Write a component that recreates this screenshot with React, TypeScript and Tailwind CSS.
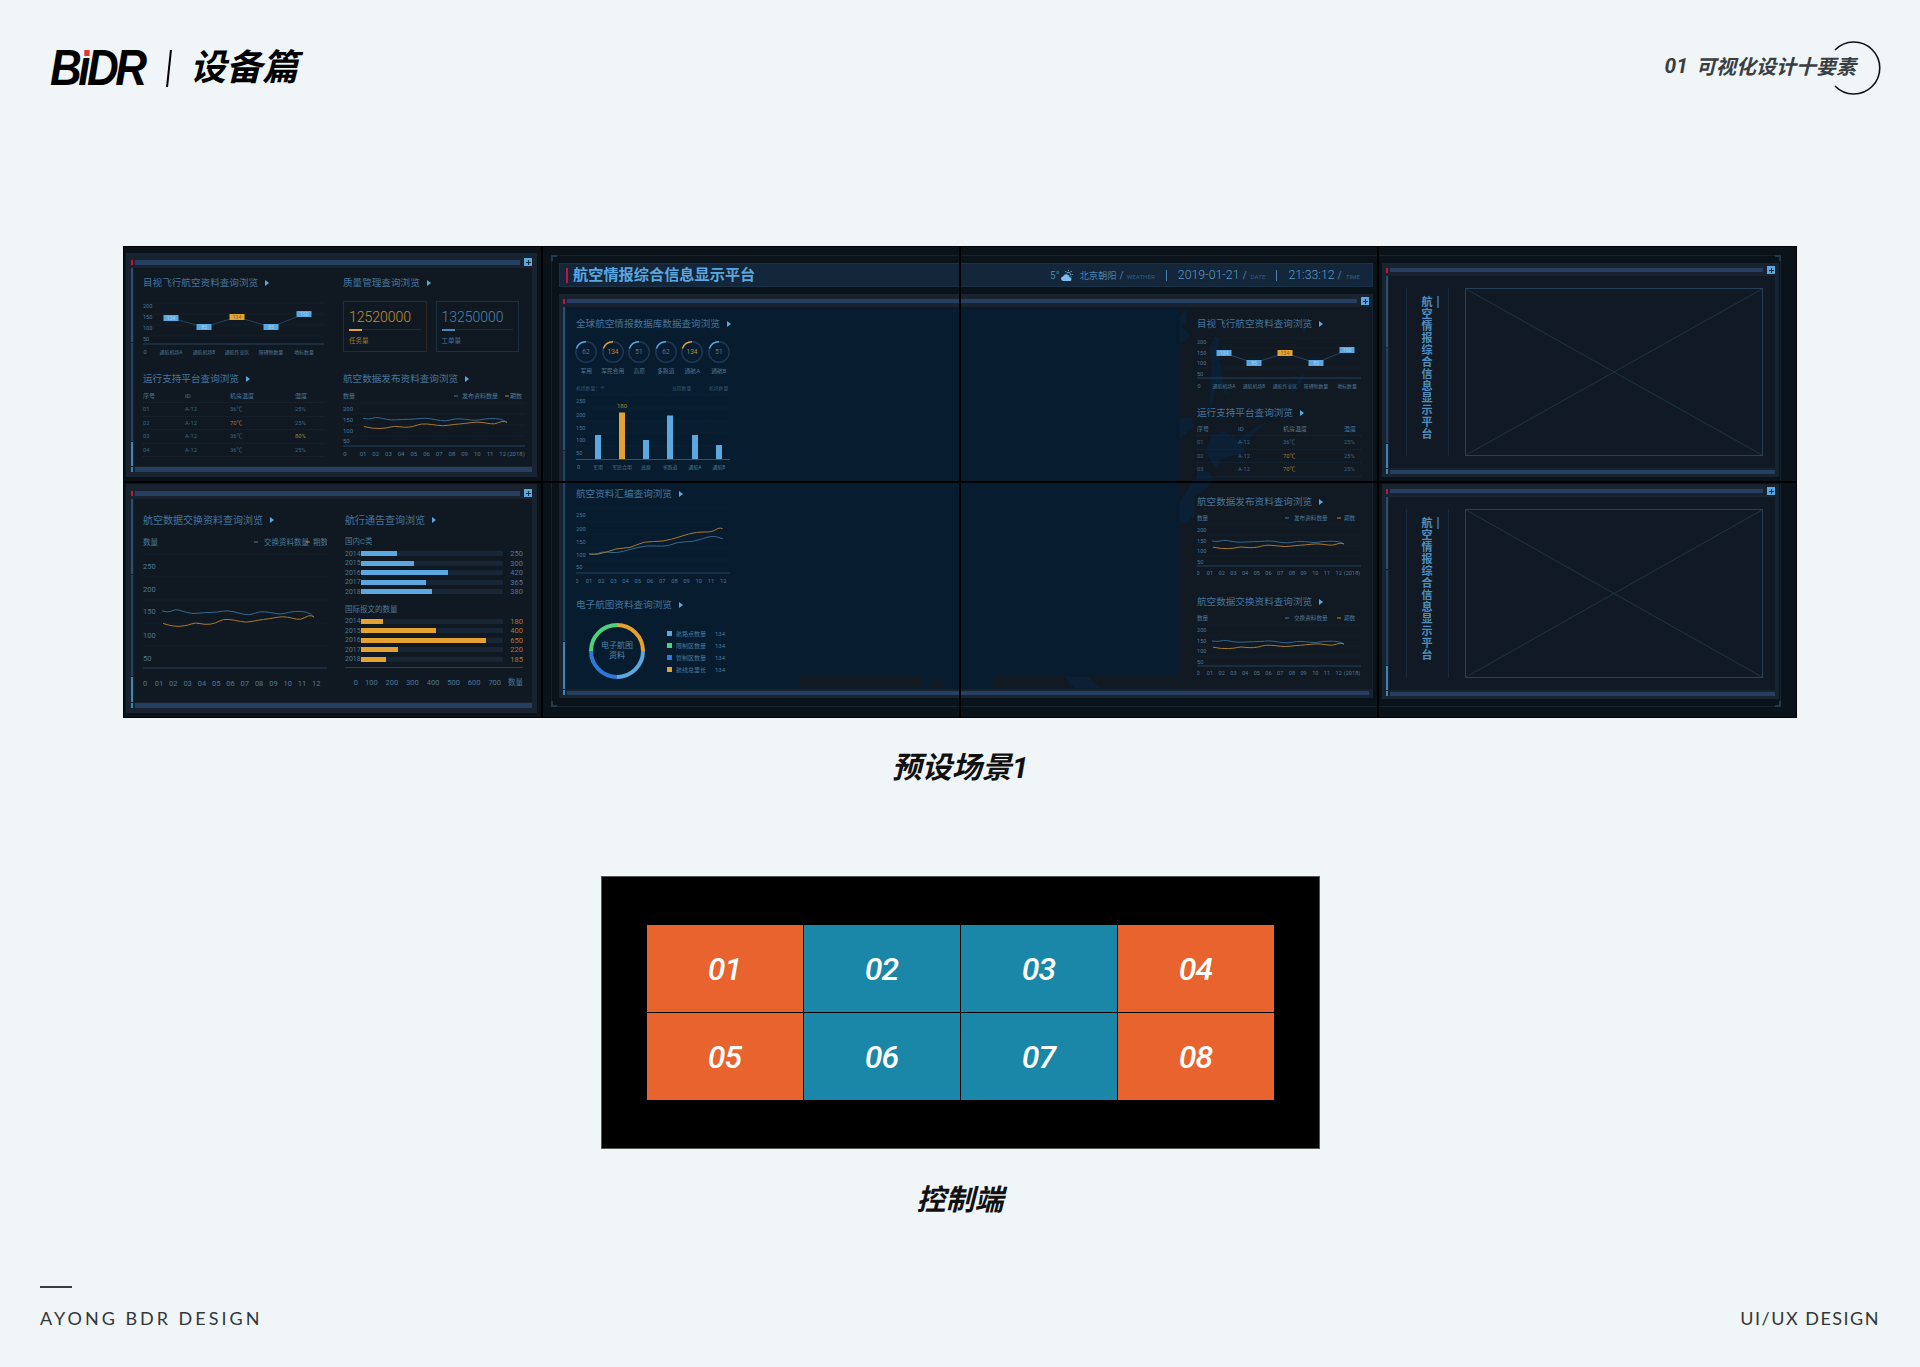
import { Plus } from 'lucide-react';
import { BsCloudSunFill } from 'react-icons/bs';

type Pt = number[];

const BLUE = '#5ba7e0';
const ORANGE = '#e3a233';
const LINE_BLUE = '#336890';
const LINE_ORANGE = '#a8782c';

const wave1: Pt[] = [[125,392],[145,398],[165,386],[185,392],[215,401],[250,397],[290,396],[325,390],[355,398],[390,406],[420,393],[450,396],[485,403],[510,395],[550,392],[575,400],[585,412]];
const wave2: Pt[] = [[128,430],[160,441],[205,436],[225,427],[255,434],[285,431],[310,416],[345,420],[380,428],[415,420],[450,416],[490,408],[520,414],[545,420],[570,404],[585,410]];
const climb1: Pt[] = [[148,222],[165,226],[185,214],[230,220],[270,208],[320,196],[380,200],[415,185],[460,186],[515,166],[548,176]];
const climb2: Pt[] = [[148,222],[175,226],[230,204],[270,205],[310,184],[370,185],[420,170],[470,155],[515,157],[535,143],[548,146]];

function smooth(pts: Pt[]) {
  let d = `M${pts[0][0]} ${pts[0][1]}`;
  for (let i = 1; i < pts.length - 1; i++) {
    const mx = (pts[i][0] + pts[i + 1][0]) / 2;
    const my = (pts[i][1] + pts[i + 1][1]) / 2;
    d += ` Q${pts[i][0]} ${pts[i][1]} ${mx} ${my}`;
  }
  const last = pts[pts.length - 1];
  return d + ` L${last[0]} ${last[1]}`;
}

// squeeze the raw wave shape into a chart's plot box
function fit(pts: Pt[], x0: number, x1: number, y0: number, y1: number) {
  return pts.map(([x, y]) => [x0 + ((x - 125) / 460) * (x1 - x0), y0 + ((y - 386) / 55) * (y1 - y0)]);
}

interface WaveProps {
  x: number;
  y: number;
  w: number;
  h: number;
  grid: number[];
  axis: number;
  labels: [string, number][];
  tickStart: number;
  tickStep: number;
  tickY: number;
  zeroX: number;
  fs: number;
  lines: [Pt[], Pt[]];
  unit?: { y: number; year?: number; legendX?: number[]; name: string };
}

function WaveChart({ x, y, w, h, grid, axis, labels, tickStart, tickStep, tickY, zeroX, fs, lines, unit }: WaveProps) {
  const ticks = ['01', '02', '03', '04', '05', '06', '07', '08', '09', '10', '11', '12'];
  const right = x + w;
  return (
    <svg width={w} height={h} viewBox={`${x} ${y} ${w} ${h}`} className="block shrink-0" fontSize={fs} fill="#4d7896">
      {grid.map((g) => (
        <line key={g} x1={x} x2={right} y1={g} y2={g} stroke="#172735" strokeWidth="0.7" strokeDasharray="1.5 1" />
      ))}
      <line x1={x} x2={right} y1={axis} y2={axis} stroke="#24435e" strokeWidth="1" />
      {labels.map(([t, ly]) => (
        <text key={t} x={x} y={ly + fs * 0.36}>{t}</text>
      ))}
      <text x={zeroX} y={tickY + fs * 0.36} textAnchor="middle">0</text>
      {ticks.map((t, i) => (
        <text key={t} x={tickStart + tickStep * i} y={tickY + fs * 0.36} textAnchor="middle">{t}</text>
      ))}
      {unit && unit.year && (
        <text x={unit.year} y={tickY + fs * 0.36} textAnchor="middle">(2018)</text>
      )}
      {unit && (
        <g>
          <text x={x} y={unit.y + fs * 0.36}>数量</text>
          {unit.legendX && (
            <g>
              <line x1={unit.legendX[0]} x2={unit.legendX[0] + 4} y1={unit.y} y2={unit.y} stroke={BLUE} strokeOpacity="0.7" />
              <text x={unit.legendX[1]} y={unit.y + fs * 0.36}>{unit.name}</text>
              <line x1={unit.legendX[2]} x2={unit.legendX[2] + 4} y1={unit.y} y2={unit.y} stroke={ORANGE} strokeOpacity="0.8" />
              <text x={unit.legendX[3]} y={unit.y + fs * 0.36}>期数</text>
            </g>
          )}
        </g>
      )}
      <path d={smooth(lines[0])} fill="none" stroke={LINE_BLUE} strokeWidth="1" />
      <path d={smooth(lines[1])} fill="none" stroke={LINE_ORANGE} strokeWidth="1" />
    </svg>
  );
}

interface TagProps {
  x: number;
  y: number;
  w: number;
  h: number;
  grid: number[];
  axis: number;
  labels: [string, number][];
  xs: number[];
  ys: number[];
  tickY: number;
  zeroX: number;
}

function TagChart({ x, y, w, h, grid, axis, labels, xs, ys, tickY, zeroX }: TagProps) {
  const names = ['通航机场A', '通航机场B', '通航作业区', '障碍物数量', '地标数量'];
  const vals = ['134', '85', '134', '85', '150'];
  return (
    <svg width={w} height={h} viewBox={`${x} ${y} ${w} ${h}`} className="block shrink-0" fontSize="5.5" fill="#4d7896">
      {grid.map((g) => (
        <line key={g} x1={x} x2={x + w} y1={g} y2={g} stroke="#172735" strokeWidth="0.7" strokeDasharray="1.5 1" />
      ))}
      <line x1={x} x2={x + w} y1={axis} y2={axis} stroke="#24435e" />
      {labels.map(([t, ly]) => (
        <text key={t} x={x} y={ly + 2}>{t}</text>
      ))}
      <text x={zeroX} y={tickY + 2} textAnchor="middle">0</text>
      <polyline points={xs.map((px, i) => `${px},${ys[i]}`).join(' ')} fill="none" stroke="#2b4d6a" strokeWidth="0.8" />
      {xs.map((px, i) => (
        <g key={i}>
          <rect x={px - 7.5} y={ys[i] - 3} width="15" height="6" fill={i === 2 ? ORANGE : BLUE} />
          <text x={px} y={ys[i] + 2} textAnchor="middle" fill={i === 2 ? '#8a6420' : '#a9d3f0'} fontSize="5">{vals[i]}</text>
          <text x={px} y={tickY + 2} textAnchor="middle" fontSize="4.9">{names[i]}</text>
        </g>
      ))}
    </svg>
  );
}

function Ring({ value, label, hot }: { value: string; label: string; hot?: boolean }) {
  const color = hot ? ORANGE : BLUE;
  return (
    <div className="w-[26.5px] flex flex-col items-center">
      <svg width="24" height="24" viewBox="0 0 24 24" className="block">
        <circle cx="12" cy="12" r="10.2" fill="none" stroke="#1c3a56" strokeWidth="1.4" />
        <path d="M2.4 8.5 A10.2 10.2 0 0 1 12 1.8" fill="none" stroke={color} strokeWidth="1.4" />
        <text x="12" y="14.3" textAnchor="middle" fontSize="6.5" fill={hot ? '#b98a33' : '#4d7896'}>{value}</text>
      </svg>
      <span className="mt-[2px] text-[5.8px] leading-[10px] whitespace-nowrap text-[#4d7896]">{label}</span>
    </div>
  );
}

function BarChart() {
  const xs = [598, 622, 646, 670, 695, 719];
  const tops = [435, 412.5, 440, 415.5, 435, 445];
  const names = ['军用', '军民合用', '高原', '多跑道', '通航A', '通航B'];
  const ys: [string, number][] = [['250', 401], ['200', 415], ['150', 428], ['100', 440], ['50', 453]];
  return (
    <svg width="154" height="86" viewBox="576 384 154 86" className="block" fontSize="5.6" fill="#4d7896">
      <text x="576" y="390" fontSize="4.8" fill="#355570">机场数量：个</text>
      <text x="672" y="390" fontSize="4.8" fill="#355570">高程数量</text>
      <text x="709" y="390" fontSize="4.8" fill="#355570">机场数量</text>
      {[395, 408, 421, 433, 446].map((g) => (
        <line key={g} x1="576" x2="730" y1={g} y2={g} stroke="#12293d" strokeWidth="0.7" strokeDasharray="1.5 1" />
      ))}
      {ys.map(([t, y]) => (
        <text key={t} x="576" y={y + 2}>{t}</text>
      ))}
      <text x="577" y="469">0</text>
      <text x="622" y="407.5" textAnchor="middle" fill="#a8812f" fontSize="6">180</text>
      {xs.map((x, i) => (
        <g key={x}>
          <rect x={x - 3} y={tops[i]} width="6" height={459 - tops[i]} fill={i === 1 ? ORANGE : BLUE} />
          <text x={x} y="469" textAnchor="middle" fontSize="4.9">{names[i]}</text>
        </g>
      ))}
      <line x1="576" x2="730" y1="459.5" y2="459.5" stroke="#2b5270" />
    </svg>
  );
}

function Donut() {
  const r = 26;
  return (
    <div className="relative w-[60px] h-[60px]">
      <svg width="60" height="60" viewBox="0 0 60 60" className="block" fill="none" strokeWidth="4">
        <path d={`M30 ${30 - r} A${r} ${r} 0 0 1 ${30 + r} 30`} stroke={ORANGE} />
        <path d={`M${30 + r} 30 A${r} ${r} 0 0 1 30 ${30 + r}`} stroke={BLUE} />
        <path d={`M30 ${30 + r} A${r} ${r} 0 0 1 ${30 - r} 30`} stroke="#2e78d8" />
        <path d={`M${30 - r} 30 A${r} ${r} 0 0 1 30 ${30 - r}`} stroke="#4fd07a" />
      </svg>
      <div className="absolute inset-0 flex flex-col items-center justify-center text-[8px] leading-[10px] text-[#4f86ad]">
        <span>电子航图</span>
        <span>资料</span>
      </div>
    </div>
  );
}

function Title({ text, size = 'text-[9.6px]' }: { text: string; size?: string }) {
  return (
    <div className={`h-[14px] flex items-center gap-[7px] whitespace-nowrap text-[#44759c] ${size}`}>
      <span>{text}</span>
      <span className="w-0 h-0 border-y-[3px] border-l-[4px] border-y-transparent border-l-[#5ba7e0]" />
    </div>
  );
}

function DataTable({ rows, cols }: { rows: { id: string; temp: string; hum: string; hotT?: boolean; hotH?: boolean }[]; cols: string }) {
  return (
    <div className="text-[5.8px] text-[#3e6380]">
      <div className={`grid ${cols} h-[14px] items-center border-b border-dotted border-[#172735] text-[#4d7896] text-[6px]`}>
        <span>序号</span>
        <span>ID</span>
        <span>机房温度</span>
        <span>湿度</span>
      </div>
      {rows.map((r) => (
        <div key={r.id} className={`grid ${cols} h-[13.6px] items-center border-b border-dotted border-[#172735]`}>
          <span>{r.id}</span>
          <span>A-12</span>
          <span className={r.hotT ? 'text-[#a8782c]' : ''}>{r.temp}</span>
          <span className={r.hotH ? 'text-[#a8782c]' : ''}>{r.hum}</span>
        </div>
      ))}
    </div>
  );
}

function StatCard({ value, label, hot }: { value: string; label: string; hot?: boolean }) {
  return (
    <div className={`w-[84px] h-[51px] border px-[5px] pt-[6px] ${hot ? 'border-[#33291a]' : 'border-[#1b2f42]'}`}>
      <div className={`text-[14px] leading-[18px] font-light ${hot ? 'text-[#c48f30]' : 'text-[#4a86b3]'}`}>{value}</div>
      <div className="mt-[3px] h-[1px] bg-[#1f2c38]">
        <div className={`w-[13px] h-[1.5px] ${hot ? 'bg-[#e3a233]' : 'bg-[#4a86b3]'}`} />
      </div>
      <div className={`mt-[7px] text-[6.5px] leading-[8px] ${hot ? 'text-[#a8782c]' : 'text-[#44759c]'}`}>{label}</div>
    </div>
  );
}

function HBars({ rows, color, text }: { rows: [string, number, string][]; color: string; text: string }) {
  return (
    <div className="flex flex-col">
      {rows.map(([year, width, val]) => (
        <div key={year} className="h-[9.5px] flex items-center text-[7px]">
          <span className="w-[16px] text-[#4d7896]">{year}</span>
          <div className="w-[142px] h-[5px] bg-[#172535]">
            <div className={`h-[5px] ${color}`} style={{ width }} />
          </div>
          <span className={`flex-1 text-right text-[7.5px] ${text}`}>{val}</span>
        </div>
      ))}
    </div>
  );
}

function Stripe() {
  return (
    <div className="shrink-0 flex flex-col w-[2px] gap-[1px] mr-[1px]">
      <div className="flex-[3] bg-[#2b4d70]" />
      <div className="flex-[4] bg-[#24405e]" />
      <div className="flex-[1] bg-[#3d85b8]" />
    </div>
  );
}

function Panel({ children, className, small }: { children: React.ReactNode; className: string; small?: boolean }) {
  return (
    <div className={`flex flex-col bg-[#18232f] ${small ? 'px-[4px] pt-[3px] pb-[3px]' : 'px-[5px] pt-[5px] pb-[5px]'} ${className}`}>
      <div className="h-[8px] flex items-center shrink-0">
        <div className="w-[2px] h-[5px] bg-[#c0143c] mr-[2px]" />
        <div className={`flex-1 bg-[#263f60] ${small ? 'h-[4px]' : 'h-[5px]'}`} />
        <div className="ml-[4px] w-[8px] h-[8px] bg-[#5ba7e0] flex items-center justify-center">
          <Plus size={7} strokeWidth={3.5} color="#12263a" />
        </div>
      </div>
      <div className="mt-[2px] flex-1 flex min-h-0">
        <Stripe />
        {children}
      </div>
      <div className="mt-[1px] h-[5px] flex items-center shrink-0">
        <div className="w-[2px] h-[5px] bg-[#3d85b8] mr-[2px]" />
        <div className={`flex-1 bg-[#263f60] ${small ? 'h-[4px]' : 'h-[5px]'}`} />
      </div>
    </div>
  );
}

function WirePanel({ className }: { className: string }) {
  return (
    <Panel small className={className}>
      <div className="flex-1 bg-[#111a24] flex py-[12px] pl-[17px]">
        <div className="w-[1px] bg-[#1a2a3a]" />
        <div className="w-[41px] pt-[8px] pl-[12px] flex gap-[6px]">
          <span className="[writing-mode:vertical-rl] [text-orientation:upright] text-[11px] leading-[12px] tracking-[1px] font-bold text-[#4f8fc0]">
            航空情报综合信息显示平台
          </span>
          <span className="w-[2px] h-[12px] bg-[#2f5f86]" />
        </div>
        <div className="w-[1px] bg-[#1a2a3a]" />
        <div className="ml-[16px] w-[298px] border border-[#26405a] relative">
          <svg className="absolute inset-0 w-full h-full" viewBox="0 0 298 168" preserveAspectRatio="none">
            <line x1="0" y1="0" x2="298" y2="168" stroke="#1f3548" strokeWidth="0.9" />
            <line x1="298" y1="0" x2="0" y2="168" stroke="#1f3548" strokeWidth="0.9" />
          </svg>
        </div>
      </div>
    </Panel>
  );
}

function MapShapes() {
  return (
    <svg className="absolute inset-0 w-full h-full" viewBox="565 308 806 381" preserveAspectRatio="none">
      <g transform="translate(960 240) scale(0.3333)" fill="#0b2034">
        <polygon points="760,290 775,300 770,340 780,380 785,420 805,470 790,460 770,430 755,490 745,510 748,440 752,380 745,330" />
        <polygon points="750,590 790,575 830,600 880,565 920,545 895,570 850,610 850,640 780,660 770,690 730,640" />
        <polygon points="655,235 680,208 675,250 660,262 690,290 655,315" />
        <polygon points="655,540 690,530 700,560 655,600" />
        <polygon points="710,690 750,700 755,720 705,720" />
        <polygon points="1030,205 1034,250 1028,310 1026,260" />
        <polygon points="1025,400 1030,410 1015,445 990,465 1005,435" />
      </g>
      <g transform="translate(960 480) scale(0.3333)" fill="#0b2034">
        <polygon points="700,0 755,0 740,25 700,50 705,100 680,130 655,130 655,70" />
      </g>
      <g transform="translate(540 480) scale(0.3333)" fill="#111922">
        <polygon points="770,625 778,588 1025,588 1140,588 1145,625" />
        <polygon points="1170,625 1172,595 1190,595 1220,625" />
      </g>
      <g transform="translate(960 480) scale(0.3333)" fill="#111922">
        <polygon points="95,625 100,588 655,588 655,625" />
      </g>
      <g transform="translate(960 480) scale(0.3333)" fill="#0b2034">
        <polygon points="310,590 380,590 420,625 340,625" />
      </g>
    </svg>
  );
}

export default function App() {
  const c1: [string, number][] = [['200', 409], ['150', 420], ['100', 431], ['50', 441]];
  const rowsA = [
    { id: '01', temp: '36℃', hum: '25%' },
    { id: '02', temp: '70℃', hum: '25%', hotT: true },
    { id: '03', temp: '36℃', hum: '80%', hotH: true },
    { id: '04', temp: '36℃', hum: '25%' },
  ];
  const rowsB = [
    { id: '01', temp: '36℃', hum: '25%' },
    { id: '02', temp: '70℃', hum: '25%', hotT: true },
    { id: '03', temp: '70℃', hum: '25%', hotT: true },
  ];

  const rightWave = (dy: number, name: string) => (
    <WaveChart
      x={1197}
      y={511 + dy}
      w={164}
      h={67}
      fs={5.6}
      grid={[525 + dy, 535 + dy, 546 + dy, 556 + dy]}
      axis={566 + dy}
      labels={[['200', 530 + dy], ['150', 541 + dy], ['100', 551 + dy], ['50', 562 + dy]]}
      zeroX={1198}
      tickStart={1210}
      tickStep={11.7}
      tickY={573 + dy}
      lines={[fit(wave1, 1212, 1344, 540 + dy, 549 + dy), fit(wave2, 1212, 1344, 540 + dy, 549 + dy)]}
      unit={{ y: 518 + dy, year: 1352, legendX: [1285, 1294, 1337, 1344], name }}
    />
  );

  return (
    <div className="relative w-[1920px] h-[1367px] overflow-hidden flex flex-col bg-[#f0f5f8] font-['Roboto','Noto_Sans_CJK_SC',sans-serif]">
      <header className="h-[247px] shrink-0 flex justify-between items-start pt-[44px] pl-[50px] pr-[64px]">
        <div className="flex items-center h-[48px] text-black italic">
          <span className="relative text-[50px] leading-[48px] font-bold tracking-[-4px] w-[100px] whitespace-nowrap font-['Liberation_Sans',sans-serif] scale-x-[0.88] origin-left">
            BıDR
            <span className="absolute left-[39px] top-[6px] w-[6px] h-[6px] bg-[#e8342a]" />
          </span>
          <span className="ml-[18px] w-[2px] h-[37px] bg-black skew-x-[-6deg]" />
          <span className="ml-[20px] text-[36px] leading-[48px] font-bold">设备篇</span>
        </div>
        <div className="relative flex items-center h-[46px] italic text-[#3a3d42] whitespace-nowrap">
          <span className="text-[21px] font-bold mr-[8px]">01</span>
          <span className="text-[20px] font-bold">可视化设计十要素</span>
          <svg width="56" height="56" viewBox="0 0 56 56" className="absolute right-[-26px] top-[-4px]" fill="none">
            <path d="M9 10 A26 26 0 1 1 9 46" stroke="#111" strokeWidth="1.6" />
          </svg>
        </div>
      </header>

      <div className="relative mx-[124px] h-[470px] shrink-0 flex bg-[#0a131a] ring-1 ring-black text-[#4d7896]">
        <div className="w-[418px] shrink-0 flex flex-col pl-[2px] pr-[5px] pt-[6px] gap-[7px]">
          <Panel className="h-[224px]">
            <div className="flex-1 bg-[#101922] grid grid-cols-[200px_minmax(0,1fr)] pl-[9px] pt-[8px] pr-[13px]">
              <div className="flex flex-col">
                <Title text="目视飞行航空资料查询浏览" />
                <div className="mt-[8px]">
                  <TagChart
                    x={143}
                    y={298}
                    w={181}
                    h={60}
                    grid={[303, 314, 325, 336]}
                    axis={344}
                    labels={[['200', 306], ['150', 317], ['100', 328], ['50', 339]]}
                    xs={[171, 204, 237, 271, 304]}
                    ys={[318, 327, 317, 327, 314]}
                    tickY={352}
                    zeroX={145}
                  />
                </div>
                <div className="mt-[14px]">
                  <Title text="运行支持平台查询浏览" />
                </div>
                <div className="mt-[3px] w-[181px]">
                  <DataTable rows={rowsA} cols="grid-cols-[42px_45px_65px_1fr]" />
                </div>
              </div>
              <div className="flex flex-col">
                <Title text="质量管理查询浏览" />
                <div className="mt-[11px] flex gap-[9px]">
                  <StatCard value="12520000" label="任务量" hot />
                  <StatCard value="13250000" label="工单量" />
                </div>
                <div className="mt-[20px]">
                  <Title text="航空数据发布资料查询浏览" />
                </div>
                <div className="mt-[3px]">
                  <WaveChart
                    x={343}
                    y={389}
                    w={182}
                    h={71}
                    fs={6}
                    grid={[403, 414, 425, 436]}
                    axis={446}
                    labels={c1}
                    zeroX={345}
                    tickStart={363}
                    tickStep={12.7}
                    tickY={454}
                    lines={[fit(wave1, 363, 507, 417, 429), fit(wave2, 363, 507, 417, 429)]}
                    unit={{ y: 396, year: 516, legendX: [454, 462, 505, 510], name: '发布资料数量' }}
                  />
                </div>
              </div>
            </div>
          </Panel>
          <Panel className="h-[229px]">
            <div className="flex-1 bg-[#101922] grid grid-cols-[202px_minmax(0,1fr)] pl-[9px] pt-[14px] pr-[9px]">
              <div className="flex flex-col">
                <Title text="航空数据交换资料查询浏览" size="text-[10px]" />
                <div className="mt-[7px]">
                  <WaveChart
                    x={143}
                    y={534}
                    w={184}
                    h={155}
                    fs={7.5}
                    grid={[554, 577, 600, 623, 646]}
                    axis={668}
                    labels={[['250', 566], ['200', 589], ['150', 611], ['100', 635], ['50', 658]]}
                    zeroX={145}
                    tickStart={159}
                    tickStep={14.3}
                    tickY={683}
                    lines={[fit(wave1, 162, 314, 609, 627), fit(wave2, 162, 314, 609, 627)]}
                    unit={{ y: 542, legendX: [254, 264, 306, 313], name: '交换资料数量' }}
                  />
                </div>
              </div>
              <div className="flex flex-col">
                <Title text="航行通告查询浏览" size="text-[10px]" />
                <div className="mt-[9px] h-[11px] leading-[11px] text-[7.5px] text-[#4d7896]">国内C类</div>
                <div className="mt-[2px]">
                  <HBars
                    color="bg-[#5ba7e0]"
                    text="text-[#4d7896]"
                    rows={[['2014', 36, '250'], ['2015', 53, '300'], ['2016', 87, '420'], ['2017', 65, '365'], ['2018', 71, '380']]}
                  />
                </div>
                <div className="mt-[7px] h-[11px] leading-[11px] text-[7.5px] text-[#4d7896]">国际报文的数量</div>
                <div className="mt-[2px]">
                  <HBars
                    color="bg-[#e3a233]"
                    text="text-[#a8782c]"
                    rows={[['2014', 22, '180'], ['2015', 75, '400'], ['2016', 125, '650'], ['2017', 37, '220'], ['2018', 25, '185']]}
                  />
                </div>
                <div className="mt-[3px] h-[1px] bg-[#24435e]" />
                <div className="mt-[10px] flex text-[7.5px] leading-[10px] text-[#4d7896] whitespace-nowrap">
                  <span className="w-[17px] pr-[3px] text-right">0</span>
                  {['100', '200', '300', '400', '500', '600', '700'].map((t) => (
                    <span key={t} className="w-[22px] text-center">{t}</span>
                  ))}
                  <span className="ml-[3px]">数量</span>
                </div>
              </div>
            </div>
          </Panel>
        </div>

        <div className="w-[836px] shrink-0 flex flex-col pl-[17px] pr-[5px] pt-[16px]">
          <div className="h-[24px] flex items-center bg-[#13263a] border border-[#1a3044] pl-[6px] pr-[12px] whitespace-nowrap text-[#4a82ad]">
            <span className="w-[2px] h-[15px] bg-[#c0143c]" />
            <span className="ml-[5px] text-[15.2px] font-bold text-[#5ba7e0]">航空情报综合信息显示平台</span>
            <div className="ml-auto flex items-baseline">
              <span className="text-[10px]">5°</span>
              <BsCloudSunFill size={12} className="ml-[2px] mr-[6px] self-center text-[#7fbcea]" />
              <span className="text-[9.3px]">北京朝阳</span>
              <span className="ml-[3px] text-[10px]">/</span>
              <span className="ml-[3px] text-[6.2px] text-[#355f80]">WEATHER</span>
              <span className="mx-[11px] w-[1px] h-[11px] bg-[#4a82ad] self-center" />
              <span className="text-[12.3px] font-light text-[#5b9ccc]">2019-01-21</span>
              <span className="ml-[3px] text-[10px]">/</span>
              <span className="ml-[4px] text-[6.2px] text-[#355f80]">DATE</span>
              <span className="mx-[11px] w-[1px] h-[11px] bg-[#4a82ad] self-center" />
              <span className="text-[12.3px] font-light text-[#5b9ccc]">21:33:12</span>
              <span className="ml-[3px] text-[10px]">/</span>
              <span className="ml-[4px] text-[6.2px] text-[#355f80]">TIME</span>
            </div>
          </div>
          <Panel small className="mt-[7px] h-[404px]">
            <div className="relative flex-1 flex bg-[#071c2f]">
              <div className="w-[613px] shrink-0" />
              <div className="w-[193px] shrink-0 bg-[#111922]" />
              <MapShapes />
              <div className="absolute inset-0 flex">
                <div className="w-[613px] shrink-0 pl-[10px] pt-[10px] flex flex-col">
                  <Title text="全球航空情报数据库数据查询浏览" />
                  <div className="mt-[9px] -ml-[3px] flex">
                    <Ring value="62" label="军用" />
                    <Ring value="134" label="军民合用" hot />
                    <Ring value="51" label="高原" />
                    <Ring value="62" label="多跑道" />
                    <Ring value="134" label="通航A" hot />
                    <Ring value="51" label="通航B" />
                  </div>
                  <div className="mt-[8px]">
                    <BarChart />
                  </div>
                  <div className="mt-[17px]">
                    <Title text="航空资料汇编查询浏览" />
                  </div>
                  <div className="mt-[1px]">
                    <WaveChart
                      x={576}
                      y={502}
                      w={154}
                      h={84}
                      fs={5.8}
                      grid={[509, 522, 534, 547, 560]}
                      axis={573}
                      labels={[['250', 515], ['200', 529], ['150', 542], ['100', 555], ['50', 567]]}
                      zeroX={577}
                      tickStart={589}
                      tickStep={12.2}
                      tickY={581}
                      lines={[
                        climb1.map(([x, y]) => [540 + x / 3, 480 + y / 3]),
                        climb2.map(([x, y]) => [540 + x / 3, 480 + y / 3]),
                      ]}
                    />
                  </div>
                  <div className="mt-[12px]">
                    <Title text="电子航图资料查询浏览" />
                  </div>
                  <div className="mt-[9px] flex items-center">
                    <div className="ml-[11px]">
                      <Donut />
                    </div>
                    <div className="ml-[20px] flex flex-col text-[6px] text-[#4d7896]">
                      {[['#5ba7e0', '航路点数量'], ['#4fd07a', '限制区数量'], ['#2e78d8', '管制区数量'], ['#e3a233', '航线总里长']].map(([c, t]) => (
                        <div key={t} className="h-[12px] flex items-center">
                          <span className="w-[5px] h-[5px]" style={{ backgroundColor: c }} />
                          <span className="ml-[4px] w-[39px]">{t}</span>
                          <span>134</span>
                        </div>
                      ))}
                    </div>
                  </div>
                </div>
                <div className="w-[193px] shrink-0 pl-[18px] pt-[10px] flex flex-col">
                  <Title text="目视飞行航空资料查询浏览" />
                  <div className="mt-[4px]">
                    <TagChart
                      x={1197}
                      y={335}
                      w={164}
                      h={56}
                      grid={[338, 348, 358, 368]}
                      axis={378}
                      labels={[['200', 342], ['150', 353], ['100', 363], ['50', 374]]}
                      xs={[1224, 1254, 1285, 1316, 1347]}
                      ys={[353, 363, 353, 363, 350]}
                      tickY={386}
                      zeroX={1199}
                    />
                  </div>
                  <div className="mt-[15px]">
                    <Title text="运行支持平台查询浏览" />
                  </div>
                  <div className="mt-[2px] w-[164px]">
                    <DataTable rows={rowsB} cols="grid-cols-[41px_45px_61px_1fr]" />
                  </div>
                  <div className="mt-[18px]">
                    <Title text="航空数据发布资料查询浏览" />
                  </div>
                  <div className="mt-[2px]">{rightWave(0, '发布资料数量')}</div>
                  <div className="mt-[17px]">
                    <Title text="航空数据交换资料查询浏览" />
                  </div>
                  <div className="mt-[2px]">{rightWave(100, '交换资料数量')}</div>
                </div>
              </div>
            </div>
          </Panel>
        </div>

        <div className="w-[418px] shrink-0 flex flex-col pl-[4px] pr-[17px] pt-[16px] gap-[7px]">
          <WirePanel className="h-[214px]" />
          <WirePanel className="h-[215px]" />
        </div>

        {/* outer frame and the seams of the video wall lie over the panels */}
        <div className="absolute left-[427px] top-[8px] w-[1230px] h-[452px] border border-[#15232e] pointer-events-none">
          <span className="absolute -left-px -top-px w-[6px] h-[6px] border-l-2 border-t-2 border-[#21394d]" />
          <span className="absolute -right-px -top-px w-[6px] h-[6px] border-r-2 border-t-2 border-[#21394d]" />
          <span className="absolute -left-px -bottom-px w-[6px] h-[6px] border-l-2 border-b-2 border-[#21394d]" />
          <span className="absolute -right-px -bottom-px w-[6px] h-[6px] border-r-2 border-b-2 border-[#21394d]" />
        </div>
        <div className="absolute top-0 bottom-0 left-[417px] w-[2px] bg-black" />
        <div className="absolute top-0 bottom-0 left-[835px] w-[2px] bg-black" />
        <div className="absolute top-0 bottom-0 left-[1253px] w-[2px] bg-black" />
        <div className="absolute left-0 right-0 top-[234px] h-[2px] bg-black" />
      </div>

      <div className="mt-[35px] h-[32px] shrink-0 text-center text-[30px] leading-[32px] font-bold italic text-[#111]">预设场景1</div>

      <div className="mt-[92px] w-[719px] h-[273px] shrink-0 mx-auto bg-black border border-[#555] flex items-center justify-center">
        <div className="w-[627px] h-[175px] grid grid-cols-4 grid-rows-2 gap-[1px] text-white text-[32px] font-medium italic tracking-[-1px]">
          {['01', '02', '03', '04', '05', '06', '07', '08'].map((n, i) => (
            <div key={n} className={`pt-[1px] flex items-center justify-center ${i % 4 === 0 || i % 4 === 3 ? 'bg-[#e8632d]' : 'bg-[#1a87a8]'}`}>
              {n}
            </div>
          ))}
        </div>
      </div>

      <div className="mt-[35px] h-[32px] shrink-0 text-center text-[29px] leading-[32px] font-bold italic text-[#111]">控制端</div>

      <footer className="mt-auto flex justify-between items-end px-[40px] pb-[40px] text-[#33363a]">
        <div>
          <div className="w-[32px] h-[2px] bg-[#3a3d42] mb-[21px]" />
          <div className="text-[18px] leading-[18px] tracking-[3px] font-['Lato',sans-serif]">AYONG BDR DESIGN</div>
        </div>
        <div className="text-[18px] leading-[18px] tracking-[1.5px] font-['Lato',sans-serif]">UI/UX DESIGN</div>
      </footer>
    </div>
  );
}
